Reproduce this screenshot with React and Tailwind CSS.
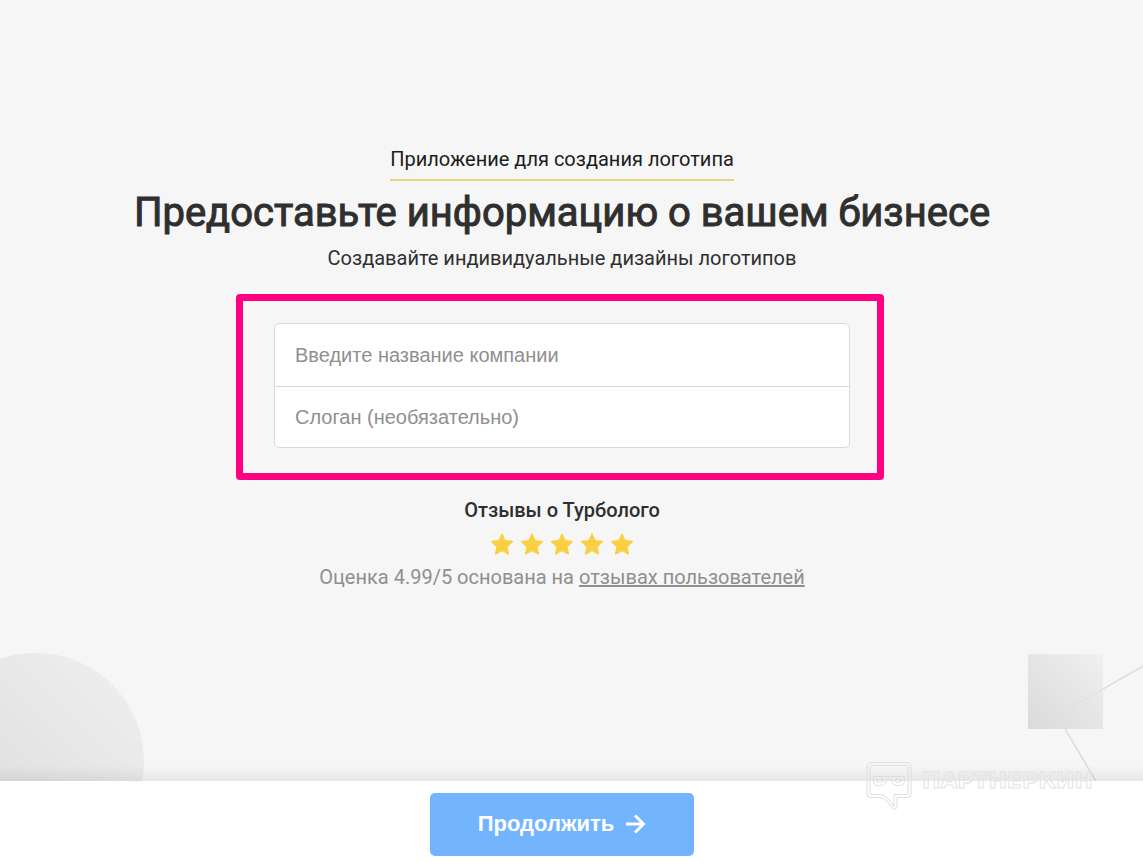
import { useState } from 'react';

const stars = [1, 2, 3, 4, 5];

function Star() {
  return (
    <svg viewBox="0 0 24 24" className="h-6 w-6" fill="#fbcf44" aria-hidden>
      <path
        d="M12 2.2l2.9 6.6 7.3.8-5.4 5 1.5 7.2L12 18.3l-6.3 3.5 1.5-7.2-5.4-5 7.3-.8z"
        stroke="#fbcf44"
        strokeWidth="1.6"
        strokeLinejoin="round"
      />
    </svg>
  );
}

function Shapes() {
  return (
    <>
      <svg
        className="pointer-events-none absolute bottom-0 left-0"
        width="144"
        height="128"
        viewBox="0 0 144 128"
        aria-hidden
      >
        <defs>
          <linearGradient id="circle" x1="0" y1="1" x2="1" y2="0">
            <stop offset="0" stopColor="#d9d9d9" />
            <stop offset="1" stopColor="#f0f0f0" />
          </linearGradient>
        </defs>
        <circle cx="36" cy="108" r="108" fill="url(#circle)" />
      </svg>
      <svg
        className="pointer-events-none absolute right-0 bottom-0"
        width="115"
        height="127"
        viewBox="0 0 115 127"
        fill="none"
        aria-hidden
      >
        <defs>
          <linearGradient id="square" x1="0" y1="1" x2="1" y2="0">
            <stop offset="0" stopColor="#dadada" />
            <stop offset="1" stopColor="#f0f0f0" />
          </linearGradient>
        </defs>
        <rect width="75" height="75" fill="url(#square)" />
        <path d="M75 35L30 61.500l8 13.500" stroke="#e0e0e0" />
        <path d="M115 12L75 35M37 75l31 52" stroke="#d8d8d8" strokeWidth="1.300" />
      </svg>
    </>
  );
}

function Watermark() {
  return (
    <div className="pointer-events-none absolute right-[50px] bottom-[51px] flex items-start gap-2">
      <svg width="48" height="50" viewBox="0 0 48 50" fill="none" stroke="#dedede" aria-hidden>
        <path d="M5 1.500h36q4 0 4 4v27q0 4-4 4H31v10q-1 3-4 1l-7-8q-3-3-6-3H5q-4 0-4-4v-27q0-4 4-4z" />
        <path d="M6 4.500h34q2 0 2 2v25q0 2-2 2H28v12l-6-8q-4-4-8-4H6q-2 0-2-2v-25q0-2 2-2z" />
        <path d="M7.500 15.500h31v4q0 5-5 5h-2q-5 0-6-6h-5q-1 6-6 6h-2q-5 0-5-5z" />
        <path d="M10.500 18.500h7q0 3-3 3h-1q-3 0-3-3zM28.500 18.500h7q0 3-3 3h-1q-3 0-3-3z" />
      </svg>
      <span className="pt-1 font-['DejaVu_Sans',sans-serif] text-[22px] leading-8 font-bold text-transparent [-webkit-text-stroke:1px_#e3e3e3]">
        ПАРТНЕРКИН
      </span>
    </div>
  );
}

export default function App() {
  const [company, setCompany] = useState('');
  const [slogan, setSlogan] = useState('');

  return (
    <div className="relative flex min-h-screen flex-col overflow-hidden bg-[#f6f6f6] font-['Roboto',sans-serif] text-[#2f2f2f]">
      <main className="relative flex flex-1 flex-col items-center pt-[143px] pr-[19px]">
        <Shapes />
        <div className="pointer-events-none absolute inset-x-0 bottom-0 h-4 bg-linear-to-b from-transparent to-black/6" />

        <p className="border-b-2 border-[#e8d283] pb-1 text-xl leading-8 text-[#1c1c1c]">
          Приложение для создания логотипа
        </p>
        <h1 className="mt-1 text-[40px] leading-[56px] font-normal [-webkit-text-stroke:1px_#2f2f2f]">
          Предоставьте информацию о вашем бизнесе
        </h1>
        <p className="mt-px text-xl leading-8">Создавайте индивидуальные дизайны логотипов</p>

        <form id="brand" className="relative mt-[49px] w-full max-w-[576px]">
          <div className="pointer-events-none absolute -top-[29px] -right-[34px] -bottom-8 -left-[38px] rounded-sm border-[7px] border-[#ff0080]" />
          <div className="overflow-hidden rounded-[5px] border border-[#d9d9d9] bg-white font-['Liberation_Sans',sans-serif] text-xl">
            <input
              type="text"
              aria-label="Введите название компании"
              placeholder="Введите название компании"
              value={company}
              onChange={(e) => setCompany(e.target.value)}
              className="block h-[63px] w-full border-b border-[#d9d9d9] px-5 outline-none placeholder:text-[#8f8f8f]"
            />
            <input
              type="text"
              aria-label="Слоган (необязательно)"
              placeholder="Слоган (необязательно)"
              value={slogan}
              onChange={(e) => setSlogan(e.target.value)}
              className="block h-[60px] w-full px-5 outline-none placeholder:text-[#8f8f8f]"
            />
          </div>
        </form>

        <h2 className="mt-12 text-xl leading-7 font-medium">Отзывы о Турболого</h2>
        <div className="mt-2 flex gap-[6px]">
          {stars.map((n) => (
            <Star key={n} />
          ))}
        </div>
        <p className="mt-[5px] pb-12 text-xl leading-8 text-[#8f8f8f]">
          Оценка 4.99/5 основана на{' '}
          <a href="#reviews" className="underline">
            отзывах пользователей
          </a>
        </p>
      </main>

      <footer className="relative flex justify-center bg-white pt-3 pr-[19px] pb-[6px]">
        <button
          type="submit"
          form="brand"
          className="flex h-[63px] w-[264px] items-center justify-center gap-3 rounded-[5px] bg-[#73b4ff] pb-[2px] font-['Liberation_Sans',sans-serif] text-[22px] font-bold text-white"
        >
          Продолжить
          <svg width="20" height="20" viewBox="0 0 20 20" fill="none" stroke="currentColor" strokeWidth="3" aria-hidden>
            <path d="M0 10h17M9 1.500l8.500 8.500L9 18.500" />
          </svg>
        </button>
      </footer>
      <Watermark />
    </div>
  );
}
